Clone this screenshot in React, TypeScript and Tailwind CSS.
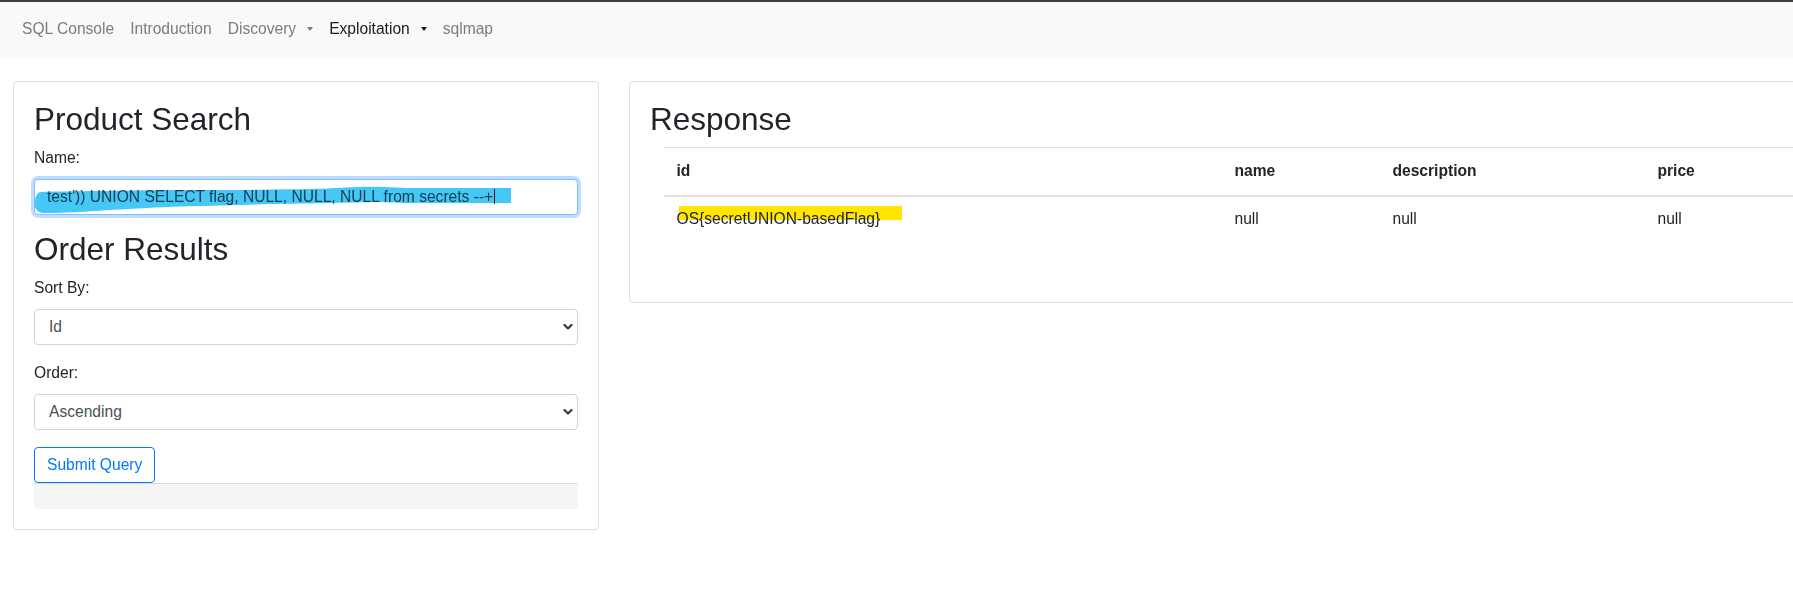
import React from "react";

const font = "font-['Liberation_Sans',Arial,Helvetica,sans-serif]";

function Caret({ dark }: { dark?: boolean }) {
  return (
    <span
      className={`ml-[11px] inline-block h-0 w-0 border-x-[3.5px] border-t-[4.5px] border-x-transparent align-[0.2em] ${
        dark ? "border-t-[#1a1a1a]" : "border-t-[#7c7c7d]"
      }`}
    />
  );
}

function NavLink({
  children,
  active,
  dropdown,
}: {
  children: React.ReactNode;
  active?: boolean;
  dropdown?: boolean;
}) {
  return (
    <a
      className={`px-2 leading-[23px] whitespace-nowrap ${
        active ? "text-[#1a1a1a]" : "text-[#7c7c7d]"
      }`}
    >
      {children}
      {dropdown && <Caret dark={active} />}
    </a>
  );
}

function Chevron() {
  return (
    <svg
      className="absolute right-[4px] top-1/2 -translate-y-1/2"
      width="10"
      height="7"
      viewBox="0 0 10 7"
    >
      <polyline
        points="1.5,1.5 5,5 8.5,1.5"
        fill="none"
        stroke="#3a3a3a"
        strokeWidth="2.2"
        strokeLinecap="round"
        strokeLinejoin="round"
      />
    </svg>
  );
}

function SelectBox({ value }: { value: string }) {
  return (
    <div className="relative flex h-[36px] items-center rounded-[4px] border border-[#ced4da] bg-white pl-[14px] text-[#495057]">
      {value}
      <Chevron />
    </div>
  );
}

export default function App() {
  return (
    <div
      className={`${font} min-h-screen w-full overflow-hidden bg-white text-[15.6px] leading-[1.5] text-[#212529]`}
    >
      <nav className="flex h-[57px] items-center border-t-2 border-[#3d3e40] bg-[#f8f9fa] pb-[2px] pl-[14px]">
        <NavLink>SQL Console</NavLink>
        <NavLink>Introduction</NavLink>
        <NavLink dropdown>Discovery</NavLink>
        <NavLink active dropdown>
          Exploitation
        </NavLink>
        <NavLink>sqlmap</NavLink>
      </nav>

      <div className="flex items-start gap-[30px] pl-[13px] pt-[24px]">
        {/* Left card */}
        <div className="w-[586px] shrink-0 rounded-[4px] border border-[#dfdfdf] px-5 pb-5 pt-[19px]">
          <h2 className="mb-2 text-[31.5px] leading-[37px] font-normal">Product Search</h2>
          <label className="mb-[9.5px] block">Name:</label>
          <div className="relative mb-4 h-[36px] rounded-[4px] border border-[#80bdff] bg-white shadow-[0_0_0_3px_rgba(0,123,255,0.25)]">
            <div className="flex h-full items-center pb-[1px] pl-[12px] text-[#495057] whitespace-nowrap">
              <span>test')) UNION SELECT flag, NULL, NULL, NULL from secrets --+</span>
              <span className="ml-[1px] inline-block h-[15px] w-[1px] bg-[#222]" />
            </div>
            <svg
              className="pointer-events-none absolute left-[-1px] top-[-1px] mix-blend-multiply"
              width="544"
              height="38"
              viewBox="0 0 544 38"
            >
              <path
                d="M 1 24 C 0 30, 4 34, 10 34 C 25 34, 40 33.5, 60 32 C 75 31, 85 30.5, 93 30 C 120 28.5, 140 27.5, 165 27 C 190 26.5, 215 25.5, 236 25 C 280 24.5, 320 23.5, 343 23 C 355 23.5, 365 24, 379 24 L 477 24 L 477 9 L 375 9 C 350 8, 335 7.5, 325 8 C 300 9, 285 10, 272 10 C 240 10.5, 220 11, 200 11 C 170 11, 150 11, 129 11 C 100 11.5, 80 12, 57 12 C 35 12.5, 15 12.5, 6 13 C 2 15, 1 19, 1 24 Z"
                fill="#45c8f5"
              />
            </svg>
          </div>

          <h2 className="mb-2 text-[31.5px] leading-[37px] font-normal">Order Results</h2>
          <label className="mb-[9.5px] block">Sort By:</label>
          <div className="mb-4">
            <SelectBox value="Id" />
          </div>
          <label className="mb-[9.5px] block">Order:</label>
          <div className="mb-[17.5px]">
            <SelectBox value="Ascending" />
          </div>
          <button className="flex h-[36px] items-center rounded-[4px] border border-[#007bff] bg-white px-[12px] text-[#007bff]">
            Submit Query
          </button>
          <div className="h-[26px] rounded-b-[3px] border-t border-[#dcdcdc] bg-[#f5f5f5]" />
        </div>

        {/* Right card */}
        <div className="w-[1300px] shrink-0 rounded-[4px] border border-[#dfdfdf] px-5 pb-5 pt-[19px]">
          <h2 className="mb-[8.5px] text-[31.5px] leading-[37px] font-normal">Response</h2>
          <div className="mb-[41px] ml-[14px]">
            <div className="grid h-[50px] grid-cols-[558px_158px_265px_1fr] items-center border-t border-b-2 border-[#dee2e6] font-bold">
              <div className="px-[12.5px]">id</div>
              <div className="px-[12.5px]">name</div>
              <div className="px-[12.5px]">description</div>
              <div className="px-[12.5px]">price</div>
            </div>
            <div className="grid h-[44px] grid-cols-[558px_158px_265px_1fr] items-center">
              <div className="px-[12.5px]">
                <span className="relative inline-block">
                  <span className="absolute left-[2px] top-[-0.5px] h-[13.5px] w-[223px] bg-[#ffe500]" />
                  <span className="relative">OS{"{"}secretUNION-basedFlag{"}"}</span>
                </span>
              </div>
              <div className="px-[12.5px]">null</div>
              <div className="px-[12.5px]">null</div>
              <div className="px-[12.5px]">null</div>
            </div>
          </div>
        </div>
      </div>
    </div>
  );
}
